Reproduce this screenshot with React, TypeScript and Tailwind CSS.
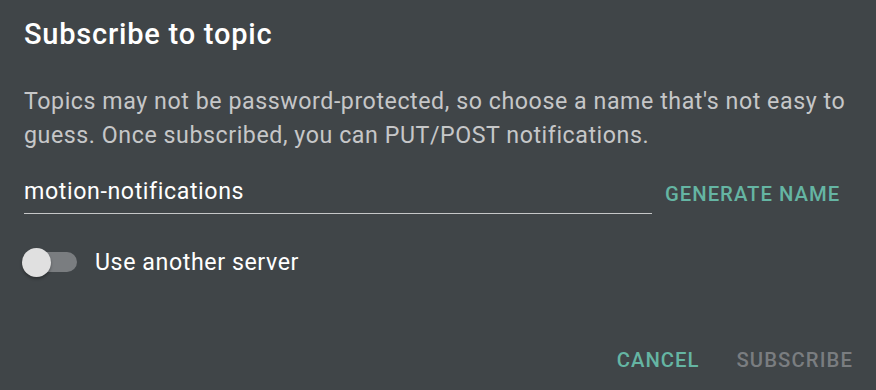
export default function App() {
  return (
    <div
      className="w-[876px] h-[390px] bg-[#404548] px-[24px] overflow-hidden flex flex-col"
      style={{ fontFamily: "Roboto, 'Liberation Sans', sans-serif" }}
    >
      {/* title */}
      <h2 className="mt-[14px] text-[29px] leading-[40px] font-medium tracking-[0.78px] text-white">
        Subscribe to topic
      </h2>

      {/* description */}
      <p className="mt-[30px] text-[23.2px] leading-[34px] tracking-[0.56px] text-[#c6c7c8]">
        Topics may not be password-protected, so choose a name that's not easy to guess. Once
        subscribed, you can PUT/POST notifications.
      </p>

      {/* topic input + generate */}
      <div className="mt-[24px] flex items-start">
        <div className="w-[628px] h-[38px] border-b border-[#c6c7c8] pb-[7px]">
          <div className="text-[23.2px] leading-[30px] tracking-[0.6px] text-white">
            motion-notifications
          </div>
        </div>
        <button className="ml-[13px] text-[20.3px] leading-[36px] font-medium uppercase tracking-[1px] text-[#65b5a3]">
          Generate name
        </button>
      </div>

      {/* switch */}
      <div className="mt-[33px] flex items-center h-[30px]">
        <div className="relative w-[56px] h-[30px] shrink-0 -ml-[2px]">
          <div className="absolute left-[7px] top-[5px] w-[48px] h-[20px] rounded-full bg-[#7a7d80]" />
          <div className="absolute left-0 top-[1px] w-[29px] h-[29px] rounded-full bg-[#e0e0e0] shadow-[0_2px_3px_rgba(0,0,0,0.3)]" />
        </div>
        <span className="ml-[17px] text-[23.2px] leading-[30px] tracking-[0.58px] text-white">
          Use another server
        </span>
      </div>

      {/* actions */}
      <div className="mt-auto mb-[12px] -mr-[1px] flex justify-end items-center">
        <button className="text-[20.3px] leading-[36px] font-medium uppercase tracking-[1px] text-[#65b5a3]">
          Cancel
        </button>
        <button
          disabled
          className="ml-[37px] text-[20.3px] leading-[36px] font-medium uppercase tracking-[1.1px] text-[#7a7d80]"
        >
          Subscribe
        </button>
      </div>
    </div>
  );
}
